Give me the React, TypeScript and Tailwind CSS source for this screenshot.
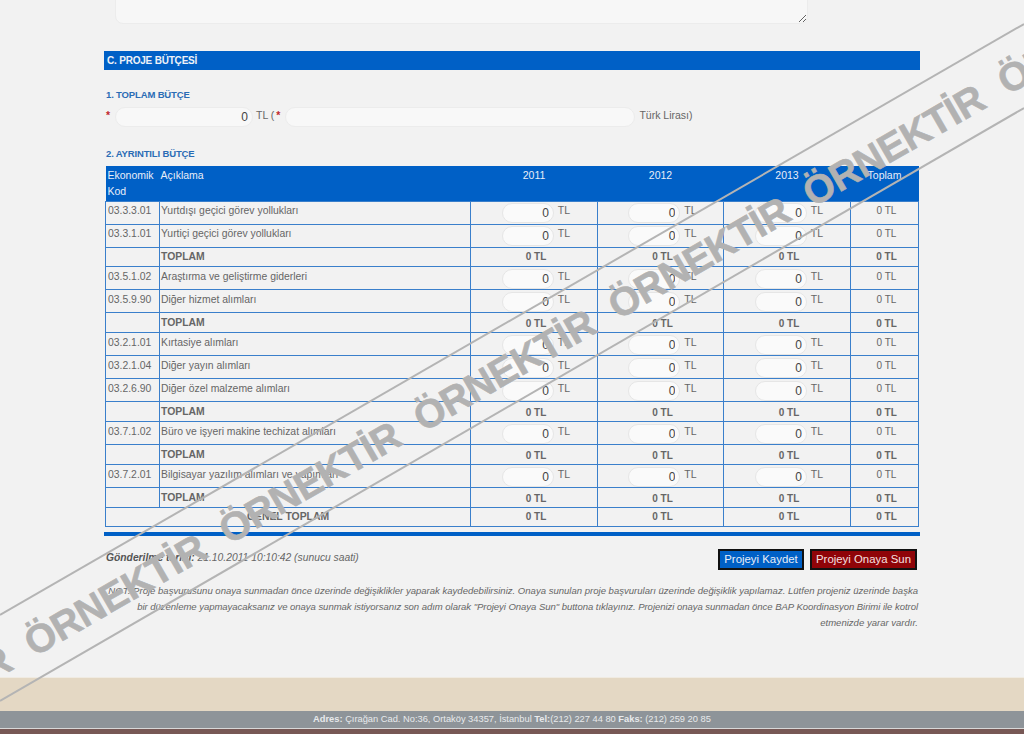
const ROWS = [
  { code: "03.3.3.01", name: "Yurtdışı geçici görev yollukları" },
  { code: "03.3.1.01", name: "Yurtiçi geçici görev yollukları" },
  { total: true, short: true },
  { code: "03.5.1.02", name: "Araştırma ve geliştirme giderleri" },
  { code: "03.5.9.90", name: "Diğer hizmet alımları" },
  { total: true },
  { code: "03.2.1.01", name: "Kırtasiye alımları" },
  { code: "03.2.1.04", name: "Diğer yayın alımları" },
  { code: "03.2.6.90", name: "Diğer özel malzeme alımları" },
  { total: true },
  { code: "03.7.1.02", name: "Büro ve işyeri makine techizat alımları" },
  { total: true },
  { code: "03.7.2.01", name: "Bilgisayar yazılım alımları ve yapımları" },
  { total: true },
];

const YEARS = ["2011", "2012", "2013"];

const CELL = "border border-[#3a7fcb] px-[2px] align-middle";

function MoneyInput({ low }: { low: boolean }) {
  return (
    <span className={low ? "inline-flex items-start justify-center pl-[4px] pt-[1px]" : "inline-flex items-start justify-center pl-[4px]"}>
      <input
        readOnly
        value="0"
        className="mt-[1px] h-[20px] w-[52px] rounded-[10px] border border-[#e6e6e6] bg-[#fafafa] pr-[4px] text-right text-[12px] leading-[18px] text-[#444]"
      />
      <span className="ml-[4px] text-[10.5px] leading-[16px]">TL</span>
    </span>
  );
}

function BudgetTable() {
  return (
    <table className="ml-[1px] w-[813px] table-fixed border-collapse text-[10.4px] text-[#666]">
      <colgroup>
        <col className="w-[54px]" />
        <col className="w-[311px]" />
        <col className="w-[127px]" />
        <col className="w-[126px]" />
        <col className="w-[127px]" />
        <col className="w-[68px]" />
      </colgroup>
      <thead>
        <tr className="h-[35px] bg-[#0060c6] text-[10.5px] leading-[16px] text-[#e8eef8]">
          <th className="px-[2px] pt-[1px] text-left align-top font-normal">Ekonomik Kod</th>
          <th className="px-[1px] pt-[1px] text-left align-top font-normal">Açıklama</th>
          {YEARS.map((y) => (
            <th key={y} className="pt-[1px] text-center align-top font-normal">{y}</th>
          ))}
          <th className="pt-[1px] text-center align-top font-normal">Toplam</th>
        </tr>
      </thead>
      <tbody>
        {ROWS.map((row, i) => {
          // from the fourth row on the text sits a pixel lower in its row
          const low = i >= 3;
          const nudge = low ? "pb-[2px]" : "pb-[4px]";
          const totalNudge = low ? "pt-[2px]" : "";
          return row.total ? (
            <tr key={i} className={row.short ? "h-[19px] font-bold" : "h-[20px] font-bold"}>
              <td className={CELL} />
              <td className={`${CELL} ${totalNudge} !px-[1px]`}>TOPLAM</td>
              {[0, 1, 2, 3].map((c) => (
                <td key={c} className={`${CELL} ${totalNudge} !pl-[6px] text-center text-[10px]`}>0 TL</td>
              ))}
            </tr>
          ) : (
            <tr key={i} className="h-[23px]">
              <td className={`${CELL} ${nudge}`}>{row.code}</td>
              <td className={`${CELL} ${nudge} !px-[1px]`}>{row.name}</td>
              {YEARS.map((y) => (
                <td key={y} className={`${CELL} text-center`}>
                  <MoneyInput low={low} />
                </td>
              ))}
              <td className={`${CELL} ${nudge} !pl-[6px] text-center text-[10px]`}>0 TL</td>
            </tr>
          );
        })}
        <tr className="h-[19px] font-bold">
          <td colSpan={2} className={`${CELL} text-center`}>GENEL TOPLAM</td>
          {[0, 1, 2, 3].map((c) => (
            <td key={c} className={`${CELL} !pl-[6px] text-center text-[10px]`}>0 TL</td>
          ))}
        </tr>
      </tbody>
    </table>
  );
}

function Watermark() {
  return (
    <svg className="pointer-events-none absolute left-0 top-0" width="1024" height="734" viewBox="0 0 1024 734">
      <line x1="0" y1="615" x2="1024" y2="24" stroke="#b4b4b4" strokeWidth="2" />
      <line x1="0" y1="701" x2="1024" y2="108" stroke="#b4b4b4" strokeWidth="2" />
      <text
        x="0"
        y="0"
        transform="translate(-355 882) rotate(-30)"
        fill="#b2b2b2"
        stroke="#b2b2b2"
        strokeWidth="0.6"
        fontFamily="'Liberation Sans', Arial, sans-serif"
        fontWeight="700"
        fontSize="39.5"
        letterSpacing="-0.5"
        wordSpacing="12"
      >
        ÖRNEKTİR ÖRNEKTİR ÖRNEKTİR ÖRNEKTİR ÖRNEKTİR ÖRNEKTİR ÖRNEKTİR ÖRNEKTİR
      </text>
    </svg>
  );
}

export default function App() {
  return (
    <div className="relative h-[734px] overflow-hidden bg-[#f2f2f2] font-['Liberation_Sans',Arial,sans-serif] text-[#666]">
      <div className="flex h-[677px] flex-col pl-[104px]">
        <textarea
          readOnly
          className="ml-[11px] mt-[-40px] h-[64px] w-[693px] shrink-0 rounded-[8px] border border-[#ececec] bg-[#f7f7f7]"
        />

        <div className="mt-[27px] flex h-[19px] w-[816px] shrink-0 items-center bg-[#0060c6] pl-[3px] text-[10px] font-bold tracking-[-0.2px] text-[#eef2f8]">
          C. PROJE BÜTÇESİ
        </div>

        <div className="ml-[2px] mt-[19px] text-[9.5px] font-bold leading-[12px] tracking-[-0.15px] text-[#2a6cb5]">1. TOPLAM BÜTÇE</div>

        <div className="mt-[6px] flex h-[20px] items-start text-[10.5px] leading-[16px]">
          <span className="ml-[2px] w-[9px] font-bold text-[#c0272d]">*</span>
          <input
            readOnly
            value="0"
            className="h-[20px] w-[138px] shrink-0 rounded-[10px] border border-[#ececec] bg-[#f8f8f8] pr-[4px] text-right text-[12px] text-[#444]"
          />
          <span className="ml-[3px]">TL (</span>
          <span className="ml-[2px] font-bold text-[#c0272d]">*</span>
          <input readOnly className="ml-[5px] h-[20px] w-[350px] shrink-0 rounded-[10px] border border-[#ececec] bg-[#f8f8f8]" />
          <span className="ml-[4px]">Türk Lirası)</span>
        </div>

        <div className="ml-[2px] mt-[21px] text-[9.5px] font-bold leading-[12px] tracking-[-0.15px] text-[#2a6cb5]">2. AYRINTILI BÜTÇE</div>

        <div className="mt-[6px]">
          <BudgetTable />
        </div>

        <div className="mt-[5px] h-[4px] w-[816px] shrink-0 bg-[#0060c6]" />

        <div className="mt-[13px] flex h-[21px] w-[816px] shrink-0 items-start justify-between">
          <div className="ml-[2px] mt-[3px] text-[10.3px] italic leading-[12px] text-[#666]">
            <b className="text-[#555]">Gönderilme tarihi:</b> 21.10.2011 10:10:42 (sunucu saati)
          </div>
          <div className="mr-[3px] flex gap-[6px] text-[11.4px] leading-[17px]">
            <button className="h-[21px] w-[86px] border-2 border-[#111] bg-[#0060c6] text-[#e8eef8]">Projeyi Kaydet</button>
            <button className="h-[21px] w-[107px] border-2 border-[#111] bg-[#8f0408] text-[#f6e0e0]">Projeyi Onaya Sun</button>
          </div>
        </div>

        <p className="mt-[13px] w-[814px] text-right text-[9.56px] italic leading-[16px] text-[#666]">
          NOT: Proje başvurusunu onaya sunmadan önce üzerinde değişiklikler yaparak kaydedebilirsiniz. Onaya sunulan proje başvuruları üzerinde değişiklik yapılamaz. Lütfen projeniz üzerinde başka
          <br />
          <span className="tracking-[-0.05px]">
            bir düzenleme yapmayacaksanız ve onaya sunmak istiyorsanız son adım olarak "Projeyi Onaya Sun" buttona tıklayınız. Projenizi onaya sunmadan önce BAP Koordinasyon Birimi ile kotrol
          </span>
          <br />
          etmenizde yarar vardır.
        </p>
      </div>

      <div className="h-[34px] border-t border-[#f0ebe2] bg-[#e4d8c4]" />
      <div className="flex h-[18px] items-center justify-center border-b border-[#d8d8d8] bg-[#8e9499] text-[9.3px] text-[#e8eaec]">
        <span>
          <b>Adres:</b> Çırağan Cad. No:36, Ortaköy 34357, İstanbul <b>Tel:</b>(212) 227 44 80 <b>Faks:</b> (212) 259 20 85
        </span>
      </div>
      <div className="h-[5px] bg-[#775855]" />

      <Watermark />
    </div>
  );
}
